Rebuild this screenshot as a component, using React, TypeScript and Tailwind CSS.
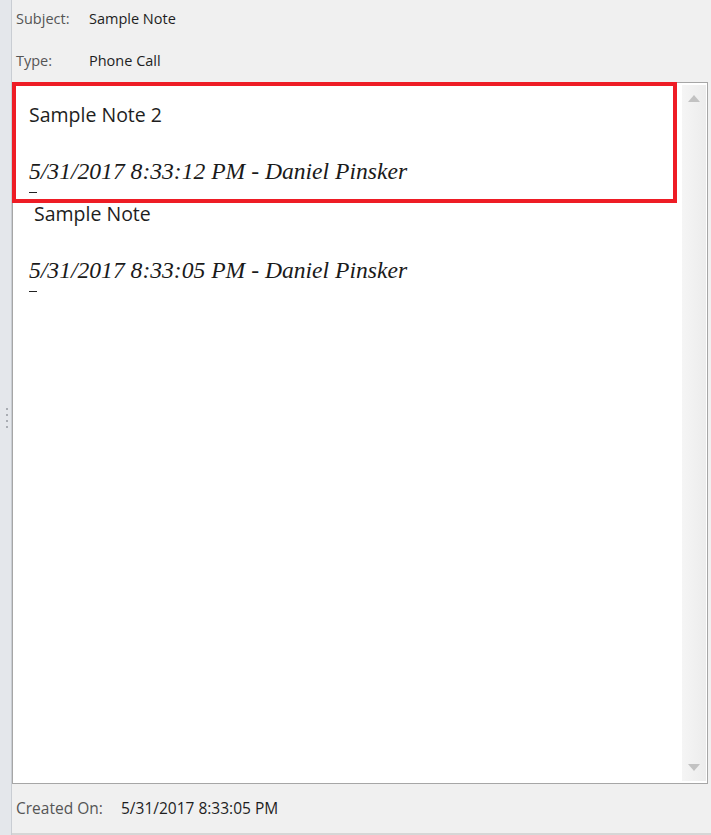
const ui = { fontFamily: '"Segoe UI", "Open Sans", "Noto Sans", sans-serif' }
const serif = { fontFamily: '"Liberation Serif", "Times New Roman", serif' }

const notes = [
  { text: 'Sample Note 2', stamp: '5/31/2017 8:33:12 PM - Daniel Pinsker', indent: 'pl-[16px]', top: 'mt-[20px]' },
  { text: 'Sample Note', stamp: '5/31/2017 8:33:05 PM - Daniel Pinsker', indent: 'pl-[21px]', top: 'mt-[9px]' },
]

function Field({ label, value }: { label: string; value: string }) {
  return (
    <div className="flex items-center h-[21px] text-[14.5px]" style={ui}>
      <span className="w-[73px] text-[#555555]">{label}</span>
      <span className="text-[#1e1e1e]">{value}</span>
    </div>
  )
}

export default function App() {
  return (
    <div className="flex h-[835px] w-[711px] bg-[#f0f0f0] overflow-hidden">
      {/* splitter strip */}
      <div className="w-[12px] shrink-0 bg-[#e4e7eb] border-r border-[#c9cdd3] flex flex-col items-center justify-center gap-[4px] pl-[2px]">
        {[0, 1, 2, 3].map((i) => (
          <div key={i} className="w-[2px] h-[2px] bg-[#a9adb3]" />
        ))}
      </div>

      <div className="flex-1 flex flex-col pr-[3px] border-b-2 border-[#d6d6d6]">
        <div className="pl-[4px] pt-[8px] pb-[11px] flex flex-col gap-[21px]">
          <Field label="Subject:" value="Sample Note" />
          <Field label="Type:" value="Phone Call" />
        </div>

        {/* notes box */}
        <div className="relative h-[702px] bg-white border border-[#a6a6a6] flex">
          <div className="flex-1">
            {notes.map((n, i) => (
              <div key={i}>
                <div className={`${n.indent} ${n.top} text-[19.5px] leading-[24px] text-[#1e1e1e]`} style={ui}>
                  {n.text}
                </div>
                <div
                  className="pl-[16px] mt-[30px] italic text-[23.6px] leading-[28px] text-[#1a1a1a]"
                  style={serif}
                >
                  {n.stamp}
                </div>
                <div className="ml-[16px] mt-[7px] w-[8px] h-[1px] bg-[#222]" />
              </div>
            ))}
          </div>

          {/* scrollbar */}
          <div className="w-[24px] shrink-0 mt-[2px] mb-[2px] mr-[1px] bg-gradient-to-r from-[#f5f5f5] to-[#ececec] flex flex-col items-center justify-between py-[10px]">
            <svg width="12" height="7" viewBox="0 0 12 7">
              <path d="M0 7 L6 0 L12 7 Z" fill="#c2c2c2" />
            </svg>
            <svg width="12" height="7" viewBox="0 0 12 7">
              <path d="M0 0 L12 0 L6 7 Z" fill="#c2c2c2" />
            </svg>
          </div>

          {/* highlight annotation */}
          <div className="absolute left-[-1px] top-[-1px] w-[665px] h-[121px] border-[4px] border-[#ee1c25]" />
        </div>

        <div className="flex-1 flex items-center pl-[4px] text-[15.5px]" style={ui}>
          <span className="w-[105px] text-[#555555]">Created On:</span>
          <span className="text-[#1e1e1e]">5/31/2017 8:33:05 PM</span>
        </div>
      </div>
    </div>
  )
}
